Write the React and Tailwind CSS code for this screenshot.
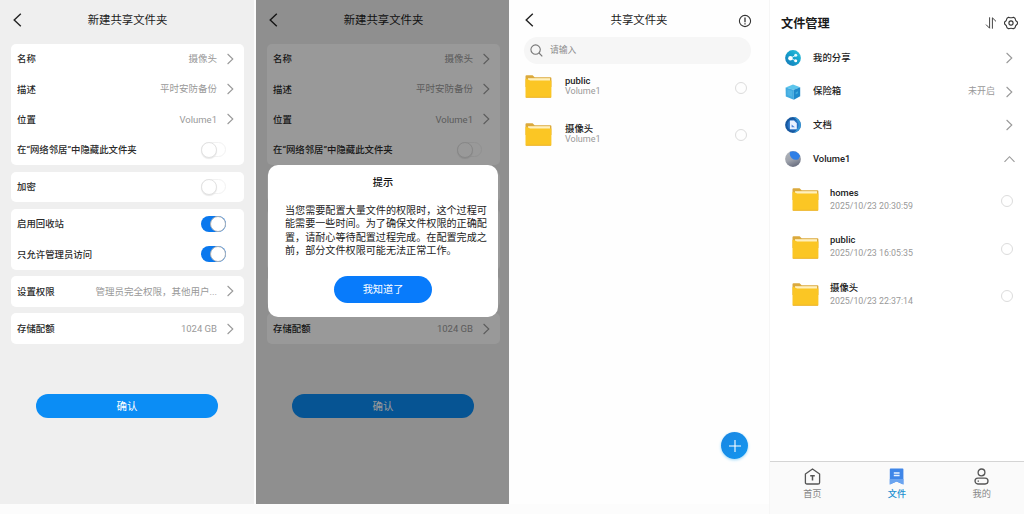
import React from 'react';

const Chevron = ({ className = '' }) => (
  <svg viewBox="0 0 7 12" className={`w-[7px] h-3 shrink-0 ${className}`} fill="none" stroke="currentColor" strokeWidth="1.1">
    <path d="M0.6 1 L5.8 6 L0.6 11" />
  </svg>
);

const BackArrow = () => (
  <svg viewBox="0 0 9 14" className="w-[9px] h-[14px]" fill="none" stroke="#222" strokeWidth="1.4">
    <path d="M7.8 0.8 L1.2 7 L7.8 13.2" />
  </svg>
);

const Folder = () => (
  <svg viewBox="0 0 27 23" className="w-[27px] h-[23px] shrink-0">
    <path d="M0.5 1.2 Q0.5 0.3 1.5 0.3 H7.6 L9.6 2.2 H25.4 Q26.4 2.2 26.4 3.2 V12 H0.5 Z" fill="#dba93c" />
    <path d="M3 3.2 H25 V7 H3 Z" fill="#fff0bd" />
    <path d="M0.5 4.4 Q0.6 3.6 1.6 3.8 L4 5 Q5 5.5 6.5 5.5 H26.4 V21.8 Q26.4 22.7 25.4 22.7 H1.5 Q0.5 22.7 0.5 21.8 Z" fill="#fbc624" />
    <path d="M0.8 22.3 H26.1" stroke="#e9b233" strokeWidth="0.8" />
  </svg>
);

const Toggle = ({ on }) =>
  on ? (
    <span className="flex justify-end items-center w-[25px] h-4 rounded-full bg-[#0a78ee]">
      <span className="w-4 h-4 rounded-full bg-white border border-[#a9b0b8]" />
    </span>
  ) : (
    <span className="flex items-center w-[25px] h-[15px] rounded-full border border-[#f2f2f2] bg-white">
      <span className="-ml-px w-4 h-4 rounded-full bg-white border border-[#e2e2e2] shadow-[0_1px_1px_#e8e8e8]" />
    </span>
  );

const Circle = () => <span className="w-3 h-3 shrink-0 rounded-full border border-[#dcdcdc]" />;

const groups = [
  [
    { label: '名称', value: '摄像头' },
    { label: '描述', value: '平时安防备份' },
    { label: '位置', value: 'Volume1' },
    { label: '在“网络邻居”中隐藏此文件夹', toggle: true, on: false },
  ],
  [{ label: '加密', toggle: true, on: false }],
  [
    { label: '启用回收站', toggle: true, on: true },
    { label: '只允许管理员访问', toggle: true, on: true },
  ],
  [{ label: '设置权限', value: '管理员完全权限，其他用户...' }],
  [{ label: '存储配额', value: '1024 GB' }],
];

const FormRow = ({ label, value, toggle, on }) => (
  <div className="flex items-center justify-between h-[30.4px] pl-1.5 pr-[10px]">
    <span className="pt-px text-[9.4px] font-medium text-[#2a2a2a]">{label}</span>
    {toggle ? (
      <span className="mr-2">
        <Toggle on={on} />
      </span>
    ) : (
      <span className="flex items-center gap-[10px] text-[9.5px] text-[#999]">
        <span className="pt-px">{value}</span>
        <Chevron />
      </span>
    )}
  </div>
);

// dialogOpen leaves the rows behind the dialog as blank cards
const FolderForm = ({ dialogOpen }) => (
  <div className="h-[504px] bg-[#efefef] pl-[11px]">
    <header className="flex items-center h-10 w-[233px]">
      <span className="w-4 pl-[2px]">
        <BackArrow />
      </span>
      <h1 className="flex-1 pt-[2px] pr-4 text-center text-[11.4px] text-[#222]">新建共享文件夹</h1>
    </header>
    <div className="flex flex-col gap-[6.7px] w-[233px] pt-[3.5px]">
      {groups.map((rows, i) => (
        <section key={i} className="rounded-[5px] bg-white">
          {rows.map((row) =>
            dialogOpen && i > 0 && i < 4 ? (
              <div key={row.label} className="h-[30.4px]" />
            ) : (
              <FormRow key={row.label} {...row} />
            )
          )}
        </section>
      ))}
    </div>
    <button className="block mt-[50.5px] ml-[25px] w-[182px] h-6 pt-px rounded-full bg-[#0b8df5] text-[10.4px] text-white">确认</button>
  </div>
);

const NoticeDialog = () => (
  <div className="absolute inset-0 bg-black/40">
    <div className="absolute left-3 top-[165px] w-[230px] h-[152px] rounded-[10px] bg-white flex flex-col items-center">
      <h2 className="mt-[10px] h-4 leading-4 text-[10.2px] font-medium text-[#111]">提示</h2>
      <div className="mt-[13px] w-[206px] pl-[5px] text-[10.1px] leading-[13.4px] text-[#222] whitespace-nowrap">
        <p>当您需要配置大量文件的权限时，这个过程可</p>
        <p>能需要一些时间。为了确保文件权限的正确配</p>
        <p>置，请耐心等待配置过程完成。在配置完成之</p>
        <p>前，部分文件权限可能无法正常工作。</p>
      </div>
      <button className="mt-[18px] w-[98px] h-[27px] pt-px rounded-full bg-[#087bfb] text-[10.2px] text-white">我知道了</button>
    </div>
  </div>
);

const shared = [
  { name: 'public', volume: 'Volume1' },
  { name: '摄像头', volume: 'Volume1' },
];

const SharedFolders = () => (
  <div className="flex flex-col w-[259px] h-[504px] bg-[#fefefe] pl-[14px]">
    <header className="flex items-center h-10 w-[228px]">
      <span className="w-4 pl-px">
        <BackArrow />
      </span>
      <h1 className="flex-1 pt-[2px] text-center text-[11.4px] text-[#222]">共享文件夹</h1>
      <svg viewBox="0 0 14 14" className="w-[14px] h-[14px] mt-px" fill="none" stroke="#333" strokeWidth="1.1">
        <circle cx="7" cy="7" r="5.6" />
        <path d="M7 3.4 V8.3 M7 9.2 V10.5" strokeWidth="1.3" />
      </svg>
    </header>
    <div className="-mt-[3px] flex items-center gap-[7px] w-[227px] h-[27px] rounded-full bg-[#f6f6f6] pl-[6px] text-[8.8px] text-[#8c8c8c]">
      <svg viewBox="0 0 13 13" className="w-[13px] h-[13px]" fill="none" stroke="#777" strokeWidth="1.1">
        <circle cx="5.6" cy="5.6" r="4.7" />
        <path d="M9 9 L12.3 12.3" />
      </svg>
      请输入
    </div>
    <ul className="w-[223px] pl-px -mt-px">
      {shared.map((f) => (
        <li key={f.name} className="flex items-center h-[47.5px]">
          <Folder />
          <div className="flex-1 pl-[13px] pb-[2px]">
            <p className="text-[9.4px] leading-[11px] font-medium text-[#222]">{f.name}</p>
            <p className="text-[9px] leading-[10px] text-[#999]">{f.volume}</p>
          </div>
          <span className="flex pt-[2px]">
            <Circle />
          </span>
        </li>
      ))}
    </ul>
    <button className="mt-auto mb-[45px] ml-[197px] flex items-center justify-center w-[27px] h-[27px] rounded-full bg-linear-to-br from-[#1a86e2] to-[#1197f0] shadow-[0_1px_3px_#9bd8f8]">
      <svg viewBox="0 0 12 12" className="w-3 h-3" stroke="#fff" strokeWidth="1.1">
        <path d="M6 0 V12 M0 6 H12" />
      </svg>
    </button>
  </div>
);

const ShareIcon = () => (
  <svg viewBox="0 0 16 16" className="w-4 h-4">
    <defs>
      <linearGradient id="share" x1="0" y1="1" x2="1" y2="0">
        <stop offset="0" stopColor="#1877b8" />
        <stop offset="0.6" stopColor="#15a6cf" />
        <stop offset="1" stopColor="#35c5dc" />
      </linearGradient>
    </defs>
    <circle cx="8" cy="8" r="7.9" fill="url(#share)" />
    <path d="M10.6 5.4 L5.6 8.2 L10.6 10.8" fill="none" stroke="#d9f7ff" strokeWidth="0.9" />
    <circle cx="5.4" cy="8.2" r="2.2" fill="#fff" />
    <circle cx="10.7" cy="5.3" r="1.5" fill="#e6faff" />
    <circle cx="10.7" cy="10.8" r="1.5" fill="#fff" />
  </svg>
);

const SafeIcon = () => (
  <svg viewBox="0 0 16 16" className="w-4 h-4">
    <path d="M8 0.4 L15.2 3.2 L8.8 5.8 L0.6 3.4 Z" fill="#5cc5ec" />
    <path d="M0.6 3.4 L8.8 5.8 V15.7 L0.8 12.6 Z" fill="#42abe0" />
    <path d="M8.8 5.8 L15.2 3.2 V12.2 L8.8 15.7 Z" fill="#1f8acb" />
    <path d="M2.4 5.4 L7.2 6.9 V12.8 L2.4 11 Z" fill="#50b5e5" />
    <path d="M10.6 8.4 L13 7.2 V9.2 L10.6 10.5 Z" fill="#3eacdf" />
  </svg>
);

const DocIcon = () => (
  <svg viewBox="0 0 16 16" className="w-4 h-4">
    <circle cx="8" cy="8" r="7.9" fill="#17589f" />
    <path d="M8 0.1 A7.9 7.9 0 0 1 8 15.9 A9 9 0 0 0 8 0.1" fill="#3596d6" />
    <circle cx="8" cy="8" r="5.6" fill="#2872c4" />
    <path d="M4.9 3.6 H9 L11.8 6.3 V12.2 H4.9 Z" fill="#eaf2ff" />
    <path d="M6.6 10.3 V7.4 L9.9 10.3 Z" fill="#4c86da" />
  </svg>
);

const VolumeIcon = () => (
  <svg viewBox="0 0 16 16" className="w-4 h-4">
    <defs>
      <linearGradient id="disk" x1="0" y1="0" x2="0.4" y2="1">
        <stop offset="0" stopColor="#b3b7bd" />
        <stop offset="0.6" stopColor="#9fa3ac" />
        <stop offset="1" stopColor="#6f7485" />
      </linearGradient>
    </defs>
    <circle cx="8" cy="8" r="7.9" fill="url(#disk)" />
    <path d="M5.2 0.7 A7.9 7.9 0 0 1 15.2 5 L13.4 8.2 A6 6 0 0 1 5.2 0.7 Z" fill="#2f7fe6" />
  </svg>
);

const entries = [
  { label: '我的分享', icon: ShareIcon },
  { label: '保险箱', icon: SafeIcon, note: '未开启' },
  { label: '文档', icon: DocIcon },
  { label: 'Volume1', icon: VolumeIcon, open: true },
];

const files = [
  { name: 'homes', time: '2025/10/23 20:30:59' },
  { name: 'public', time: '2025/10/23 16:05:35' },
  { name: '摄像头', time: '2025/10/23 22:37:14' },
];

const HomeIcon = () => (
  <svg viewBox="0 0 17 17" className="w-[17px] h-[17px]" fill="none" stroke="#555" strokeWidth="1.3" strokeLinejoin="round">
    <path d="M1.4 6 L8.5 1 L15.6 6 V14.4 Q15.6 16 14 16 H3 Q1.4 16 1.4 14.4 Z" />
    <path d="M6.2 7.8 H10.8 M8.5 7.8 V12.4" strokeWidth="1.5" />
  </svg>
);

const FilesIcon = () => (
  <svg viewBox="0 0 17 17" className="w-[17px] h-[17px]">
    <path d="M1.8 1.2 Q1.8 0.4 2.6 0.4 H14.6 Q15.4 0.4 15.4 1.2 V16.5 L8.6 13.4 L1.8 16.5 Z" fill="#3f86e8" />
    <path d="M1.8 11 H15.4 V16.5 L8.6 13.4 L1.8 16.5 Z" fill="#6aa4f0" />
    <path d="M5.8 5 H11.6 M5.8 7.4 H11.6" stroke="#e9f3ff" strokeWidth="1.5" />
  </svg>
);

const MineIcon = () => (
  <svg viewBox="0 0 17 17" className="w-[17px] h-[17px]" fill="none" stroke="#555" strokeWidth="1.3">
    <circle cx="8.5" cy="4.4" r="3.4" />
    <rect x="2" y="10.2" width="13" height="5.8" rx="2.9" />
    <path d="M4.6 13.1 H6" />
  </svg>
);

const tabs = [
  { label: '首页', icon: HomeIcon },
  { label: '文件', icon: FilesIcon, active: true },
  { label: '我的', icon: MineIcon },
];

const FileManager = () => (
  <div className="flex flex-col flex-1 h-[514px] border-l border-[#f6f6f6] bg-white">
    <header className="flex items-center h-[46px] pl-[11px] pr-[6px]">
      <h1 className="flex-1 pt-[2px] text-[12.2px] font-bold text-[#1a1a1a]">文件管理</h1>
      <svg viewBox="0 0 12 12" className="w-3 h-3 mr-[7px]" fill="none" stroke="#444" strokeWidth="1">
        <path d="M4.6 0.3 V11.2 L1 7.6 M7.4 11.7 V0.8 L11 4.4" />
      </svg>
      <svg viewBox="0 0 14 14" className="w-[14px] h-[14px] -mt-px" fill="none" stroke="#333" strokeWidth="1.1" strokeLinejoin="round">
        <path d="M4.6 1.2 Q7 2.4 9.4 1.2 L11 2.2 Q11.2 4.6 13.4 6 V8 Q11.2 9.4 11 11.8 L9.4 12.8 Q7 11.6 4.6 12.8 L3 11.8 Q2.8 9.4 0.6 8 V6 Q2.8 4.6 3 2.2 Z" />
        <circle cx="7" cy="7" r="2.1" />
      </svg>
    </header>
    <ul className="-mt-[5px]">
      {entries.map(({ label, icon: Icon, note, open }) => (
        <li key={label} className="flex items-center h-[33.7px] pl-[15px] pr-[11px]">
          <Icon />
          <span className="flex-1 pl-3 text-[9.4px] font-medium text-[#222]">{label}</span>
          {note && <span className="mr-[11px] text-[9px] text-[#999]">{note}</span>}
          <Chevron className={open ? '-rotate-90 text-[#999]' : 'text-[#999]'} />
        </li>
      ))}
    </ul>
    <ul>
      {files.map((f) => (
        <li key={f.name} className="flex items-center h-[47.5px] pl-[22px] pr-[11px]">
          <Folder />
          <div className="flex-1 pl-[11px] pb-px">
            <p className="text-[9.4px] leading-[13px] font-medium text-[#222]">{f.name}</p>
            <p className="text-[8.8px] leading-[14px] text-[#999]">{f.time}</p>
          </div>
          <span className="flex pt-[3px]">
            <Circle />
          </span>
        </li>
      ))}
    </ul>
    <nav className="mt-auto grid grid-cols-3 h-[53px] border-t border-[#d4d4d4] bg-[#fafafa]">
      {tabs.map(({ label, icon: Icon, active }) => (
        <button key={label} className="flex flex-col items-center pt-[6px]">
          <Icon />
          <span className={`mt-[2px] text-[9.2px] leading-[13px] ${active ? 'font-medium text-[#1c8fd0]' : 'text-[#888]'}`}>{label}</span>
        </button>
      ))}
    </nav>
  </div>
);

const App = () => (
  <div className="flex w-[1024px] h-[514px] overflow-hidden bg-[#fcfcfc] font-[Roboto,'Noto_Sans_CJK_SC',sans-serif]">
    <div className="w-[256px] pr-[2px]">
      <FolderForm />
    </div>
    <div className="relative w-[253px] h-[504px] mr-px">
      <FolderForm dialogOpen />
      <NoticeDialog />
    </div>
    <SharedFolders />
    <FileManager />
  </div>
);

export default App;
